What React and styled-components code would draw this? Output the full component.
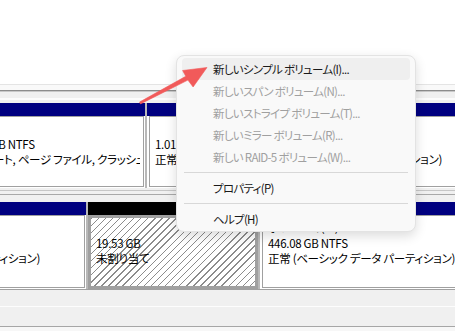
import React from 'react';
import styled, { createGlobalStyle } from 'styled-components';

const GlobalStyle = createGlobalStyle`
  html, body {
    margin: 0;
    padding: 0;
    background: #fff;
  }
  body {
    font-family: "Noto Sans CJK JP", "Noto Sans", sans-serif;
    font-size: 11.5px;
    letter-spacing: -0.3px;
    font-feature-settings: "palt";
    color: #000;
    overflow: hidden;
  }
`;

const Screen = styled.div`
  position: relative;
  width: 455px;
  height: 331px;
  overflow: hidden;
  background: #fff;
`;

const Blank = styled.div`
  height: 84px;
`;

const Rule = styled.div`
  height: ${p => p.h}px;
  background: ${p => p.c};
`;

const DiskRow = styled.div`
  display: flex;
  gap: 2px;
  height: ${p => p.h}px;
  margin-left: ${p => p.offset}px;
  background: #b8b8b8;
`;

const Partition = styled.div`
  flex: none;
  width: ${p => p.w}px;
  display: flex;
  flex-direction: column;
  background: #fff;
`;

const Stripe = styled.div`
  flex: none;
  height: 13px;
  background: ${p => p.color};
`;

const Body = styled.div`
  flex: 1;
  min-width: 0;
  overflow: hidden;
  margin: ${p => (p.selected ? '0' : '0 1px 1px 2px')};
  border: ${p => (p.selected ? 3 : 1)}px solid #a0a0a0;
  padding: ${p => (p.selected ? 2 : 4)}px 0 0 5px;
  background: ${p =>
    p.selected
      ? 'repeating-linear-gradient(135deg, #8c8c8c 0 1px, #fff 1px 5px)'
      : '#fff'};
`;

const Lines = styled.div`
  overflow: hidden;
  margin-right: 3px;
`;

const Line = styled.div`
  height: 15.5px;
  line-height: 15.5px;
  white-space: nowrap;
`;

const Menu = styled.div`
  position: absolute;
  left: 176px;
  top: 55px;
  width: 240px;
  box-sizing: border-box;
  padding: 2px 5px 1px;
  background: #f9f9f9;
  border: 1px solid #e3e3e3;
  border-radius: 8px;
  box-shadow: 0 4px 12px rgba(0, 0, 0, 0.14);
  letter-spacing: -0.7px;
  z-index: 2;
`;

const MenuItem = styled.div`
  height: 22px;
  display: flex;
  align-items: center;
  padding-left: 31px;
  border-radius: 4px;
  white-space: nowrap;
  color: ${p => (p.disabled ? '#a0a0a0' : '#1a1a1a')};
  background: ${p => (p.active ? '#efefef' : 'transparent')};
`;

const Separator = styled.div`
  height: 1px;
  margin: 4px 2px;
  background: #d8d8d8;
`;

const Arrow = styled.svg`
  position: absolute;
  left: 0;
  top: 0;
  width: 455px;
  height: 331px;
  pointer-events: none;
  z-index: 3;
`;

const disks = [
  {
    offset: -53,
    height: 85,
    parts: [
      { w: 198, color: '#000080', lines: ['(C:)', '475.40 GB NTFS', '正常 (ブート, ページ ファイル, クラッシュ ダンプ, ベーシック データ パーティション)'] },
      { w: 98, color: '#000080', lines: ['', '1.01 GB NTFS', '正常 (回復パーティション)'] },
      { w: 260, color: '#000080', lines: ['ボリューム (E:)', '465.63 GB NTFS', '正常 (ベーシック データ パーティション)'] },
    ],
  },
  {
    offset: -155,
    height: 87,
    parts: [
      { w: 241, color: '#000080', lines: ['ボリューム (F:)', '100.00 GB NTFS', '正常 (ベーシック データ パーティション)'] },
      { w: 170, color: '#000', selected: true, lines: ['', '19.53 GB', '未割り当て'] },
      { w: 260, color: '#000080', lines: ['ボリューム (D:)', '446.08 GB NTFS', '正常 (ベーシック データ パーティション)'] },
    ],
  },
];

const menu = [
  { label: '新しいシンプル ボリューム(I)...', active: true },
  { label: '新しいスパン ボリューム(N)...', disabled: true },
  { label: '新しいストライプ ボリューム(T)...', disabled: true },
  { label: '新しいミラー ボリューム(R)...', disabled: true },
  { label: '新しい RAID-5 ボリューム(W)...', disabled: true },
  { sep: true },
  { label: 'プロパティ(P)' },
  { sep: true },
  { label: 'ヘルプ(H)' },
];

const Disk = ({ disk }) => (
  <DiskRow h={disk.height} offset={disk.offset}>
    {disk.parts.map((p, i) => (
      <Partition key={i} w={p.w}>
        <Stripe color={p.color} />
        <Body selected={p.selected}>
          <Lines>
            {p.lines.map((t, j) => (
              <Line key={j}>{t}</Line>
            ))}
          </Lines>
        </Body>
      </Partition>
    ))}
  </DiskRow>
);

export default function App() {
  return (
    <Screen>
      <GlobalStyle />
      <Blank />
      <Rule h={1} c="#e4e4e4" />
      <Rule h={5} c="#f9f9f9" />
      <Rule h={1} c="#8c8c8c" />
      <Rule h={1} c="#c8c8c8" />
      <Rule h={6} c="#f0f0f0" />
      <Rule h={2} c="#fcfcfc" />
      <Rule h={3} c="#f0f0f0" />
      <Disk disk={disks[0]} />
      <Rule h={2} c="#f0f0f0" />
      <Rule h={1} c="#c6c6c6" />
      <Rule h={3} c="#f0f0f0" />
      <Rule h={1} c="#a8a8a8" />
      <Rule h={7} c="#f0f0f0" />
      <Disk disk={disks[1]} />
      <Rule h={1} c="#a0a0a0" />
      <Rule h={16} c="#f0f0f0" />
      <Rule h={1} c="#fdfdfd" />
      <Rule h={19} c="#f0f0f0" />
      <Rule h={1} c="#a6a6a6" />
      <Rule h={5} c="#f7f7f7" />

      <Menu>
        {menu.map((m, i) =>
          m.sep ? (
            <Separator key={i} />
          ) : (
            <MenuItem key={i} active={m.active} disabled={m.disabled}>
              {m.label}
            </MenuItem>
          )
        )}
      </Menu>

      <Arrow viewBox="0 0 455 331">
        <polygon
          points="139.5,102.1 185.8,76.3 182.6,70.5 207,67.5 193.1,87 187.9,80.1 140.5,103.9"
          fill="#f15a5a"
          stroke="#f15a5a"
          strokeWidth="0.6"
          strokeLinejoin="round"
        />
      </Arrow>
    </Screen>
  );
}
